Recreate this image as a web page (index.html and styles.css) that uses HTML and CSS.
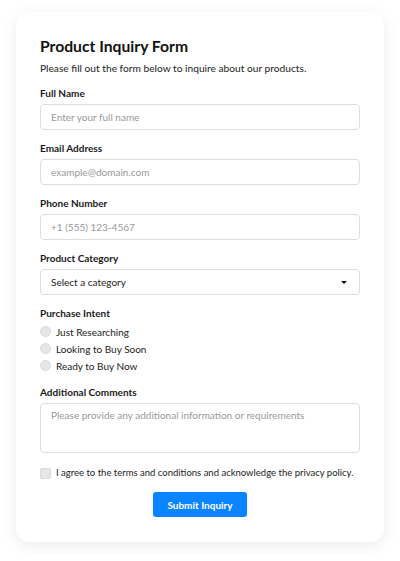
FILE: index.html
```html
<!DOCTYPE html>
<html>
<head>
  <meta charset="utf-8">
  <link rel="stylesheet" href="styles.css">
</head>
<body>
  <div class="card">
    <h1 class="title">Product Inquiry Form</h1>
    <p class="subtitle">Please fill out the form below to inquire about our products.</p>

    <div class="field">
      <label class="label" for="fullName">Full Name</label>
      <input class="input" type="text" id="fullName" placeholder="Enter your full name">
    </div>

    <div class="field">
      <label class="label" for="email">Email Address</label>
      <input class="input" type="email" id="email" placeholder="example@domain.com">
    </div>

    <div class="field">
      <label class="label" for="phone">Phone Number</label>
      <input class="input" type="tel" id="phone" placeholder="+1 (555) 123-4567">
    </div>

    <div class="field">
      <label class="label" for="category">Product Category</label>
      <div class="select" id="category">
        <span>Select a category</span>
        <span class="caret"></span>
      </div>
    </div>

    <div class="field field-radios">
      <div class="label">Purchase Intent</div>
      <div class="radio-row"><span class="radio"></span>Just Researching</div>
      <div class="radio-row"><span class="radio"></span>Looking to Buy Soon</div>
      <div class="radio-row"><span class="radio"></span>Ready to Buy Now</div>
    </div>

    <div class="field">
      <label class="label" for="comments">Additional Comments</label>
      <textarea class="input textarea" id="comments" placeholder="Please provide any additional information or requirements"></textarea>
    </div>

    <div class="agree">
      <span class="checkbox"></span>
      <span>I agree to the terms and conditions and acknowledge the privacy policy.</span>
    </div>

    <div class="actions">
      <button class="btn">Submit Inquiry</button>
    </div>
  </div>
</body>
</html>
```

FILE: styles.css
```css
body {
  margin: 0;
  padding: 12px 16px;
  background: #fff;
  font-family: Lato, "Liberation Sans", sans-serif;
  color: #222;
}
.card {
  background: white;
  border-radius: 14px;
  padding: 24px 24px 25px;
  box-shadow: 0 4px 16px rgba(0,0,0,0.08);
}
.title {
  margin: 0 0 5px;
  font-size: 15.7px;
  line-height: 20px;
  font-weight: bold;
  color: #111;
}
.subtitle {
  margin: 0 0 11px;
  font-size: 10.2px;
  line-height: 14px;
  color: #222;
}
.field {
  margin-bottom: 11px;
}
.label {
  display: block;
  margin-bottom: 4px;
  font-size: 10px;
  line-height: 14px;
  font-weight: bold;
  color: #1a1a1a;
}
.field-radios .label {
  margin-bottom: 3px;
}
.input {
  display: block;
  width: 100%;
  height: 26px;
  padding: 0 10px;
  border: 1px solid #ddd;
  border-radius: 4px;
  box-sizing: border-box;
  font-family: inherit;
  font-size: 10px;
  color: #333;
}
.input::placeholder {
  color: #999;
}
.textarea {
  height: 50px;
  padding: 5px 10px;
  resize: none;
}
.select {
  display: flex;
  align-items: center;
  justify-content: space-between;
  height: 26px;
  padding: 0 12px 0 10px;
  border: 1px solid #ddd;
  border-radius: 4px;
  box-sizing: border-box;
  font-size: 10px;
  color: #222;
}
.caret {
  width: 0;
  height: 0;
  border-left: 3px solid transparent;
  border-right: 3px solid transparent;
  border-top: 3px solid #111;
}
.radio-row {
  display: flex;
  align-items: center;
  gap: 5px;
  height: 17px;
  font-size: 10px;
  color: #222;
}
.radio {
  width: 9px;
  height: 9px;
  border-radius: 50%;
  background: #e6e6e6;
  border: 1px solid #dadada;
}
.agree {
  display: flex;
  align-items: center;
  gap: 5px;
  padding-top: 2px;
  font-size: 9.5px;
  line-height: 14px;
  white-space: nowrap;
  color: #222;
}
.checkbox {
  width: 9px;
  height: 9px;
  border-radius: 2px;
  background: #e6e6e6;
  border: 1px solid #dadada;
}
.actions {
  display: flex;
  justify-content: center;
  margin-top: 12px;
}
.btn {
  height: 25px;
  padding: 0 14px;
  border: none;
  border-radius: 3px;
  background: #0a84ff;
  color: white;
  font-family: inherit;
  font-size: 10px;
  font-weight: bold;
}
```
